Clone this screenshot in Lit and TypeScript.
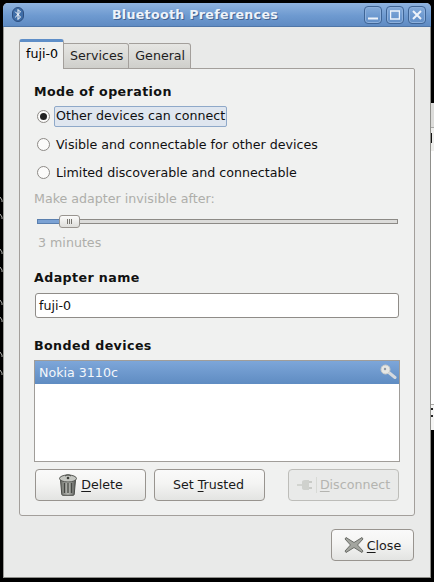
import { LitElement, html, css } from "lit";
import { customElement } from "lit/decorators.js";

const trash = html`<svg class="ic" width="20" height="23" viewBox="0 0 20 23">
  <defs><linearGradient id="tg" x1="0" x2="1" y1="0" y2="0"><stop offset="0" stop-color="#6f716c"/><stop offset=".5" stop-color="#b9bbb6"/><stop offset="1" stop-color="#5c5e5a"/></linearGradient></defs>
  <path d="M2.5 7h15l-1.3 14.500q-.1.8-1 .8H4.800q-.9 0-1-.8z" fill="url(#tg)" stroke="#4a4c48"/>
  <path d="M6.500 10v10M10 10v10M13.500 10v10" stroke="#454743" stroke-width="1.300"/>
  <ellipse cx="10" cy="5.500" rx="8.500" ry="3.500" fill="#c4c6c1" stroke="#555753"/>
  <path d="M7 3q3-2.500 6 0" fill="none" stroke="#555753" stroke-width="1.200"/>
  <circle cx="10" cy="5" r="1.300" fill="#3a3c38"/>
</svg>`;

const plug = html`<svg class="ic" width="20" height="18" viewBox="0 0 20 18">
  <path d="M0 9h5" stroke="#d2d4d0" stroke-width="2"/>
  <path d="M5 6q0-2 3-2h4v10H8q-3 0-3-2z" fill="#cfd1cd"/>
  <path d="M12 6h3M12 12h3" stroke="#c9cbc7" stroke-width="2"/>
  <path d="M19.500 1v16" stroke="#d8dad6"/>
</svg>`;

const closeIcon = html`<svg class="ic" width="20" height="18" viewBox="0 0 20 18">
  <path d="M2 1.500 10 6.500 18 1.500 19 3l-5.500 6L19 15l-1 1.500-8-5-8 5L1 15l5.500-6L1 3z" fill="#a3a59f" stroke="#6b6d68" stroke-linejoin="round"/>
</svg>`;

const key = html`<svg class="key" width="17" height="16" viewBox="0 0 17 16">
  <path d="M7 7 15 13.500" stroke="#d5d9de" stroke-width="3" stroke-linecap="round"/>
  <circle cx="5.500" cy="5.500" r="4.500" fill="#e6e7e4" stroke="#c9cbc8"/>
  <circle cx="5" cy="5" r="1.200" fill="#8e98a3"/>
</svg>`;

const btIcon = html`<svg width="12" height="15" viewBox="0 0 12 15">
  <rect x=".5" y=".5" width="11" height="14" rx="5.500" fill="#3f6ea8" stroke="#2e4f7f"/>
  <path d="M3.200 4.700 8.500 10 6 12.500v-10L8.500 5 3.200 10.300" fill="none" stroke="#fff" stroke-width="1"/>
</svg>`;

const ticks = [197, 214, 249, 267, 300, 317, 352, 370];

@customElement("app-root")
export class AppRoot extends LitElement {
  static styles = css`
    :host {
      display: block;
      position: relative;
      width: 434px;
      height: 582px;
      overflow: hidden;
      background: #000;
      font-family: "DejaVu Sans", sans-serif;
      font-size: 12.65px;
      color: #101010;
    }
    .peek { position: absolute; right: 0; width: 3px; }
    .peek.a { top: 103px; height: 24px; background: #dcdcda; border-bottom: 1px solid #a8a8a6; }
    .peek.m { top: 128px; height: 23px; background: #eeeeec; }
    .peek.m::before { content: ""; display: block; width: 1px; height: 10px; margin-top: 5px; background: #111; }
    .peek.w { top: 151px; height: 253px; background: #fff; }
    .peek.b { top: 404px; height: 26px; background: #f6f6f5; border-top: 1px solid #a8a8a6; box-sizing: border-box; }
    .peek.b::before { content: ""; display: block; width: 2px; height: 2px; margin-top: 3px; background: #222; box-shadow: 0 7px 0 #222; }
    .strip { position: absolute; left: 0; top: 0; }
    .win {
      position: absolute;
      left: 3px;
      top: 3px;
      width: 428px;
      height: 575px;
      box-sizing: border-box;
      background: #e9eae9;
      border-radius: 5px 5px 0 0;
      border-right: 1px solid #8f8f8b;
      border-bottom: 1px solid #8f8f8b;
      border-left: 1px solid #9b9b97;
      display: flex;
      flex-direction: column;
    }
    .title {
      height: 23px;
      margin: 0 -1px;
      flex: none;
      border-radius: 5px 5px 0 0;
      background: linear-gradient(#8fb3df, #6e9ad0 55%, #5f8bc3);
      border-bottom: 1px solid #4f76a8;
      display: flex;
      align-items: center;
      padding: 0 5px 0 9px;
      color: #eef3fa;
      font-weight: bold;
      letter-spacing: .3px;
      text-shadow: 1px 1px 0 #41628f;
    }
    .title .name { flex: 1; text-align: center; padding-left: 6px; }
    .wb {
      width: 16px;
      height: 16px;
      margin-left: 4px;
      border: 1px solid #3f6596;
      border-radius: 4px;
      box-shadow: inset 0 0 0 1px #8db0dc;
      display: flex;
      align-items: center;
      justify-content: center;
    }
    .body {
      flex: 1;
      padding: 13px 15px 12px 15px;
      display: flex;
      flex-direction: column;
    }
    .tabs { display: flex; align-items: flex-end; height: 29px; margin-bottom: -1px; position: relative; z-index: 1; }
    .tab {
      box-sizing: border-box;
      height: 26px;
      padding: 4px 5px 0 6px;
      background: linear-gradient(#e6e6e3, #cfcfcb);
      border: 1px solid #a39f9b;
      border-left-width: 0;
      border-radius: 0 3px 0 0;
      color: #1e1e1e;
    }
    .tab.on {
      height: 30px;
      width: 45px;
      padding: 4px 0 0 6px;
      background: #f0f1f0;
      border: 1px solid #a39f9b;
      border-top: 3px solid #5e8ec8;
      border-bottom: 0;
      border-radius: 3px 3px 0 0;
      color: #000;
    }
    .panel {
      box-sizing: border-box;
      height: 448px;
      background: #f0f1f0;
      border: 1px solid #a39f9b;
      border-radius: 0 2px 3px 3px;
      padding: 14px 14px 0 14px;
    }
    .h { font-weight: bold; height: 17px; line-height: 17px; letter-spacing: .4px; color: #111; }
    .radio { display: flex; align-items: center; height: 22px; margin-top: 6px; }
    .radio.first { margin-top: 5px; }
    .dot {
      box-sizing: border-box;
      width: 13px;
      height: 13px;
      margin: 0 6px 0 3px;
      border-radius: 50%;
      border: 1px solid #8d8a86;
      background: #fbfbfa;
      flex: none;
      display: flex;
      align-items: center;
      justify-content: center;
    }
    .dot.on::after { content: ""; width: 7px; height: 7px; background: #222; border-radius: 50%; }
    .focus {
      box-sizing: border-box;
      height: 21px;
      line-height: 18px;
      padding: 0 1px 0 1px;
      margin-left: -2px;
      background: #dfe6ef;
      border: 1px solid #8fa9c9;
      border-radius: 2px;
    }
    .dim { color: #aeaeaa; }
    .hint { height: 17px; line-height: 17px; margin-top: 7px; }
    .slider { display: flex; align-items: center; height: 13px; margin: 8px 2px 0 3px; }
    .fill { width: 23px; height: 5px; box-sizing: border-box; background: #7ba2d4; border: 1px solid #5a7fae; flex: none; }
    .thumb {
      box-sizing: border-box;
      width: 21px;
      height: 13px;
      margin: 0 -1px;
      flex: none;
      border: 1px solid #98948f;
      border-radius: 3px;
      background: linear-gradient(#fbfbfa, #dededb);
      display: flex;
      align-items: center;
      justify-content: center;
      gap: 1px;
      position: relative;
    }
    .thumb i { width: 1px; height: 5px; background: #77756f; }
    .track { flex: 1; height: 5px; box-sizing: border-box; background: #dcdcda; border: 1px solid #8c8a86; }
    .val { margin: 7px 0 0 4px; height: 16px; line-height: 16px; }
    .h2 { margin-top: 18px; }
    .entry {
      box-sizing: border-box;
      height: 25px;
      margin: 7px 1px 0;
      background: #fff;
      border: 1px solid #8f8c88;
      border-radius: 3px;
      line-height: 23px;
      padding-left: 3px;
      color: #111;
    }
    .h3 { margin-top: 19px; }
    .list {
      box-sizing: border-box;
      height: 102px;
      margin-top: 6px;
      background: #fff;
      border: 1px solid #a09d99;
    }
    .row {
      height: 23px;
      line-height: 23px;
      padding: 0 2px 0 4px;
      background: linear-gradient(#7da6d9, #5f8cc2);
      color: #f4f7fb;
      display: flex;
      align-items: center;
      justify-content: space-between;
    }
    .key { margin-top: -2px; }
    .btns { display: flex; gap: 8px; margin-top: 7px; padding: 0 1px; }
    .btn {
      box-sizing: border-box;
      height: 32px;
      display: flex;
      align-items: center;
      justify-content: center;
      gap: 3px;
      border: 1px solid #98948f;
      border-radius: 4px;
      background: linear-gradient(#fafafa 0, #f4f4f3 45%, #e3e4e2);
      color: #1a1a1a;
    }
    .btns .btn { padding-bottom: 1px; }
    .btn.del, .btn.tr, .btn.dis { width: 111px; }
    .btn.tr { padding-right: 2px; }
    .btn.dis { margin-left: auto; background: #e9eae9; border-color: #bdbdb9; color: #b4b4b0; }
    .btn u { text-decoration: underline; text-underline-offset: 2px; }
    .ic { flex: none; }
    .foot { display: flex; justify-content: flex-end; margin-top: 13px; padding-right: 1px; }
    .btn.close { width: 83px; }
  `;

  render() {
    return html`
      <div class="peek a"></div>
      <div class="peek m"></div>
      <div class="peek w"></div>
      <div class="peek b"></div>
      <svg class="strip" width="3" height="582" viewBox="0 0 3 582">
        <path d="${ticks.map((y) => `M0 ${y}l2 3v2`).join("")}" fill="none" stroke="#b4b4b0"/>
      </svg>
      <div class="win">
        <div class="title">
          ${btIcon}
          <div class="name">Bluetooth Preferences</div>
          <div class="wb"><svg width="10" height="10" viewBox="0 0 10 10"><path d="M0 8.500h10" stroke="#eef3fa" stroke-width="2"/></svg></div>
          <div class="wb"><svg width="10" height="10" viewBox="0 0 10 10"><rect x=".5" y="1" width="9" height="8" fill="none" stroke="#eef3fa" stroke-width="1.500"/></svg></div>
          <div class="wb"><svg width="10" height="10" viewBox="0 0 10 10"><path d="M1 1l8 8M9 1l-8 8" stroke="#eef3fa" stroke-width="2"/></svg></div>
        </div>
        <div class="body">
          <div class="tabs">
            <div class="tab on">fuji-0</div>
            <div class="tab">Services</div>
            <div class="tab">General</div>
          </div>
          <div class="panel">
            <div class="h">Mode of operation</div>
            <div class="radio first"><span class="dot on"></span><span class="focus">Other devices can connect</span></div>
            <div class="radio"><span class="dot"></span>Visible and connectable for other devices</div>
            <div class="radio"><span class="dot"></span>Limited discoverable and connectable</div>
            <div class="hint dim">Make adapter invisible after:</div>
            <div class="slider"><div class="fill"></div><div class="thumb"><i></i><i></i><i></i></div><div class="track"></div></div>
            <div class="val dim">3 minutes</div>
            <div class="h h2">Adapter name</div>
            <div class="entry">fuji-0</div>
            <div class="h h3">Bonded devices</div>
            <div class="list"><div class="row">Nokia 3110c ${key}</div></div>
            <div class="btns">
              <div class="btn del">${trash}<span><u>D</u>elete</span></div>
              <div class="btn tr"><span>Set <u>T</u>rusted</span></div>
              <div class="btn dis">${plug}<span><u>D</u>isconnect</span></div>
            </div>
          </div>
          <div class="foot"><div class="btn close">${closeIcon}<span><u>C</u>lose</span></div></div>
        </div>
      </div>
    `;
  }
}
